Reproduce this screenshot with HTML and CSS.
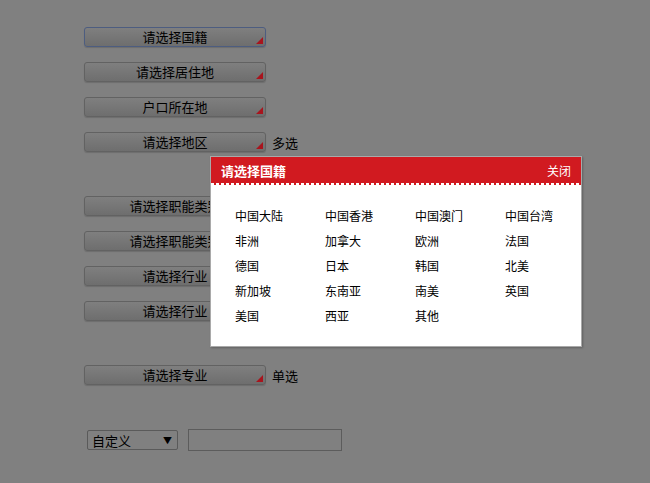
FILE: index.html
```html
<!DOCTYPE html>
<html lang="zh-CN">
<head>
    <meta charset="UTF-8">
    <title>选择器</title>
    <link rel="stylesheet" href="styles.css">
</head>
<body>
    <div class="form">
        <div class="row"><button class="picker focus">请选择国籍</button></div>
        <div class="row"><button class="picker">请选择居住地</button></div>
        <div class="row"><button class="picker">户口所在地</button></div>
        <div class="row"><button class="picker">请选择地区</button><span class="note">多选</span></div>

        <div class="row gap"><button class="picker">请选择职能类别</button></div>
        <div class="row"><button class="picker">请选择职能类别</button></div>
        <div class="row"><button class="picker">请选择行业</button></div>
        <div class="row"><button class="picker">请选择行业</button></div>

        <div class="row gap"><button class="picker">请选择专业</button><span class="note">单选</span></div>

        <div class="row custom">
            <div class="select-wrap">
                <select class="select">
                    <option>自定义</option>
                </select>
            </div>
            <input class="text" type="text">
        </div>
    </div>

    <div class="dialog">
        <div class="dialog-head">
            <span class="dialog-title">请选择国籍</span>
            <a class="dialog-close">关闭</a>
        </div>
        <ul class="dialog-list">
            <li>中国大陆</li>
            <li>中国香港</li>
            <li>中国澳门</li>
            <li>中国台湾</li>
            <li>非洲</li>
            <li>加拿大</li>
            <li>欧洲</li>
            <li>法国</li>
            <li>德国</li>
            <li>日本</li>
            <li>韩国</li>
            <li>北美</li>
            <li>新加坡</li>
            <li>东南亚</li>
            <li>南美</li>
            <li>英国</li>
            <li>美国</li>
            <li>西亚</li>
            <li>其他</li>
        </ul>
    </div>
</body>
</html>
```

FILE: styles.css
```css
body {
    margin: 0;
    background-color: #808080;
    font-family: "Noto Sans CJK SC", "DejaVu Sans", sans-serif;
    font-size: 13px;
    color: #000;
}
.form {
    padding: 27px 0 0 84px;
}
.row {
    display: flex;
    align-items: center;
    height: 20px;
    margin-bottom: 15px;
}
/* margins collapse with the row above */
.row.gap {
    margin-top: 44px;
}
.row.custom {
    margin-top: 45px;
}
.picker {
    position: relative;
    width: 182px;
    height: 20px;
    padding: 0;
    border: 1px solid #626262;
    border-radius: 3px;
    background: linear-gradient(#7f7f7f, #6e6e6e);
    box-shadow: 0 1px 1px rgba(0,0,0,0.15);
    font-family: inherit;
    font-size: 13px;
    line-height: 18px;
    color: #000;
    white-space: nowrap;
    overflow: hidden;
}
.picker.focus {
    border-color: #4d5d80;
}
.picker::after {
    content: "";
    position: absolute;
    right: 2px;
    bottom: 2px;
    border-style: solid;
    border-width: 0 0 7px 7px;
    border-color: transparent transparent #a8141d transparent;
}
.note {
    margin-left: 6px;
}
.select-wrap {
    position: relative;
    margin-left: 3px;
}
.select-wrap::after {
    content: "▼";
    position: absolute;
    right: 6px;
    top: 4px;
    font-size: 9px;
    pointer-events: none;
}
.select {
    display: block;
    width: 91px;
    height: 20px;
    padding: 0 0 0 4px;
    border: 1px solid #5a5a5a;
    border-radius: 2px;
    background-color: #808080;
    font-family: inherit;
    font-size: 13px;
    color: #000;
    appearance: none;
    -webkit-appearance: none;
}
.text {
    width: 154px;
    height: 22px;
    margin-left: 10px;
    padding: 0;
    box-sizing: border-box;
    border: 1px solid #5c5c5c;
    background-color: #808080;
}
.dialog {
    position: absolute;
    left: 210px;
    top: 156px;
    width: 370px;
    background-color: #fff;
    border: 1px solid #a9a9a9;
    box-shadow: 1px 1px 2px rgba(0,0,0,0.25);
}
.dialog-head {
    display: flex;
    justify-content: space-between;
    align-items: center;
    height: 28px;
    padding: 0 10px 2px;
    box-sizing: border-box;
    background: repeating-linear-gradient(90deg, #fff 0 3px, transparent 3px 5px) left bottom / 100% 2px no-repeat, #d11a20;
    color: #fff;
}
.dialog-title {
    font-weight: bold;
    font-size: 13px;
}
.dialog-close {
    font-size: 12px;
    cursor: pointer;
}
.dialog-list {
    display: grid;
    grid-template-columns: repeat(4, 90px);
    margin: 0;
    padding: 18px 0 18px 24px;
    list-style: none;
    font-size: 12px;
}
.dialog-list li {
    height: 25px;
    line-height: 25px;
    cursor: pointer;
}
```
